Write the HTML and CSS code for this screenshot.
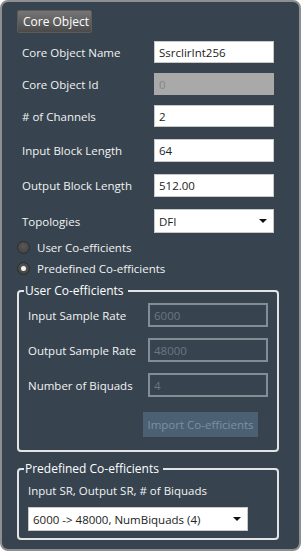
FILE: index.html
```html
<!DOCTYPE html>
<html lang="en">
<head>
  <meta charset="UTF-8" />
  <title>Core Object</title>
  <link rel="stylesheet" href="styles.css">
</head>
<body>
  <div class="panel">
    <div class="tab">Core Object</div>

    <div class="rows">
      <div class="row">
        <span class="label">Core Object Name</span>
        <div class="field">SsrclirInt256</div>
      </div>
      <div class="row">
        <span class="label">Core Object Id</span>
        <div class="field disabled">0</div>
      </div>
      <div class="row">
        <span class="label"># of Channels</span>
        <div class="field">2</div>
      </div>
      <div class="row tall">
        <span class="label">Input Block Length</span>
        <div class="field">64</div>
      </div>
      <div class="row tall">
        <span class="label">Output Block Length</span>
        <div class="field">512.00</div>
      </div>
      <div class="row tall combo">
        <span class="label">Topologies</span>
        <div class="field select">
          <span>DFI</span>
          <svg class="arrow" width="8" height="4" viewBox="0 0 8 4"><path d="M0 0h8L4 4z" fill="#111"/></svg>
        </div>
      </div>
    </div>

    <div class="radios">
      <div class="radio"><span class="dot"></span>User Co-efficients</div>
      <div class="radio"><span class="dot checked"></span>Predefined Co-efficients</div>
    </div>

    <fieldset class="group user">
      <legend>User Co-efficients</legend>
      <div class="grow">
        <span class="label">Input Sample Rate</span>
        <div class="field dim">6000</div>
      </div>
      <div class="grow">
        <span class="label">Output Sample Rate</span>
        <div class="field dim">48000</div>
      </div>
      <div class="grow">
        <span class="label">Number of Biquads</span>
        <div class="field dim">4</div>
      </div>
      <div class="import">Import Co-efficients</div>
    </fieldset>

    <fieldset class="group predef">
      <legend>Predefined Co-efficients</legend>
      <div class="caption">Input SR, Output SR, # of Biquads</div>
      <div class="field select wide">
        <span>6000 -&gt; 48000, NumBiquads (4)</span>
        <svg class="arrow" width="8" height="4" viewBox="0 0 8 4"><path d="M0 0h8L4 4z" fill="#111"/></svg>
      </div>
    </fieldset>
  </div>
</body>
</html>
```

FILE: styles.css
```css
/* Reset & basics */
* {
  box-sizing: border-box;
  font-family: 'Open Sans', 'Noto Sans', sans-serif;
}
body {
  margin: 0;
  background: #fff;
  font-size: 11.5px;
  color: #f2f2f2;
}

/* Outer panel */
.panel {
  width: 301px;
  height: 551px;
  background: #37444f;
  border: 2px solid #8d8f91;
  border-radius: 8px;
  padding: 8px 0 0 15px;
}

/* Header tab */
.tab {
  width: 75px;
  height: 23px;
  line-height: 21px;
  padding-left: 5px;
  white-space: nowrap;
  font-size: 12px;
  color: #fff;
  background: linear-gradient(#767676, #4a4a4a);
  border: 1px solid #5c5c5c;
  border-radius: 2px;
}

/* Form rows */
.rows {
  padding-top: 8px;
}
.row {
  display: flex;
  align-items: center;
  height: 22px;
  margin-top: 10px;
  padding-left: 5px;
}
.row:first-child {
  margin-top: 0;
}
.row.tall {
  height: 23px;
  margin-top: 12px;
}
.row.tall.combo {
  height: 24px;
}
.label {
  width: 132px;
  flex-shrink: 0;
  white-space: nowrap;
}
.field {
  width: 120px;
  height: 100%;
  background: #fff;
  color: #222;
  border: 1px solid #c9c9c9;
  padding-left: 4px;
  display: flex;
  align-items: center;
  white-space: nowrap;
}
.field.disabled {
  background: #a9a9a9;
  border-color: #a9a9a9;
  color: #858585;
}
.field.select {
  justify-content: space-between;
  padding-right: 6px;
}

/* Radio buttons */
.radios {
  margin-top: 4px;
}
.radio {
  display: flex;
  align-items: center;
  height: 21px;
}
.dot {
  width: 13px;
  height: 13px;
  border-radius: 50%;
  margin-right: 7px;
  background: radial-gradient(circle at 50% 40%, #585858, #3f3f3f);
  border: 1px solid #2c2c2c;
  position: relative;
}
.dot.checked::after {
  content: '';
  position: absolute;
  left: 3px;
  top: 3px;
  width: 5px;
  height: 5px;
  border-radius: 50%;
  background: #f4f4f4;
}

/* Group boxes */
.group {
  width: 262px;
  margin: 0;
  border: 2px solid #e2e4e6;
  border-radius: 4px;
  padding: 0 8px 0 9px;
}
.group legend {
  padding: 0 4px 0 1px;
  margin-left: -4px;
  font-size: 12px;
  color: #fff;
  line-height: 14px;
}
.group.user {
  margin-top: 5px;
  height: 168px;
}
.group.predef {
  margin-top: 10px;
  height: 78px;
}
.grow {
  display: flex;
  align-items: center;
  height: 24px;
  margin-top: 11px;
}
.grow:first-of-type {
  margin-top: 5px;
}
.grow .label {
  width: 120px;
}
.field.dim {
  background: #37444f;
  border: 2px solid #858d94;
  color: #6b7782;
}
.import {
  width: 115px;
  height: 25px;
  margin: 15px 0 0 115px;
  background: #4b6173;
  color: #7e909e;
  display: flex;
  align-items: center;
  justify-content: center;
}

/* Predefined */
.caption {
  margin-top: 6px;
  line-height: 17px;
  white-space: nowrap;
}
.field.wide {
  width: 220px;
  height: 24px;
  margin-top: 8px;
}
```
